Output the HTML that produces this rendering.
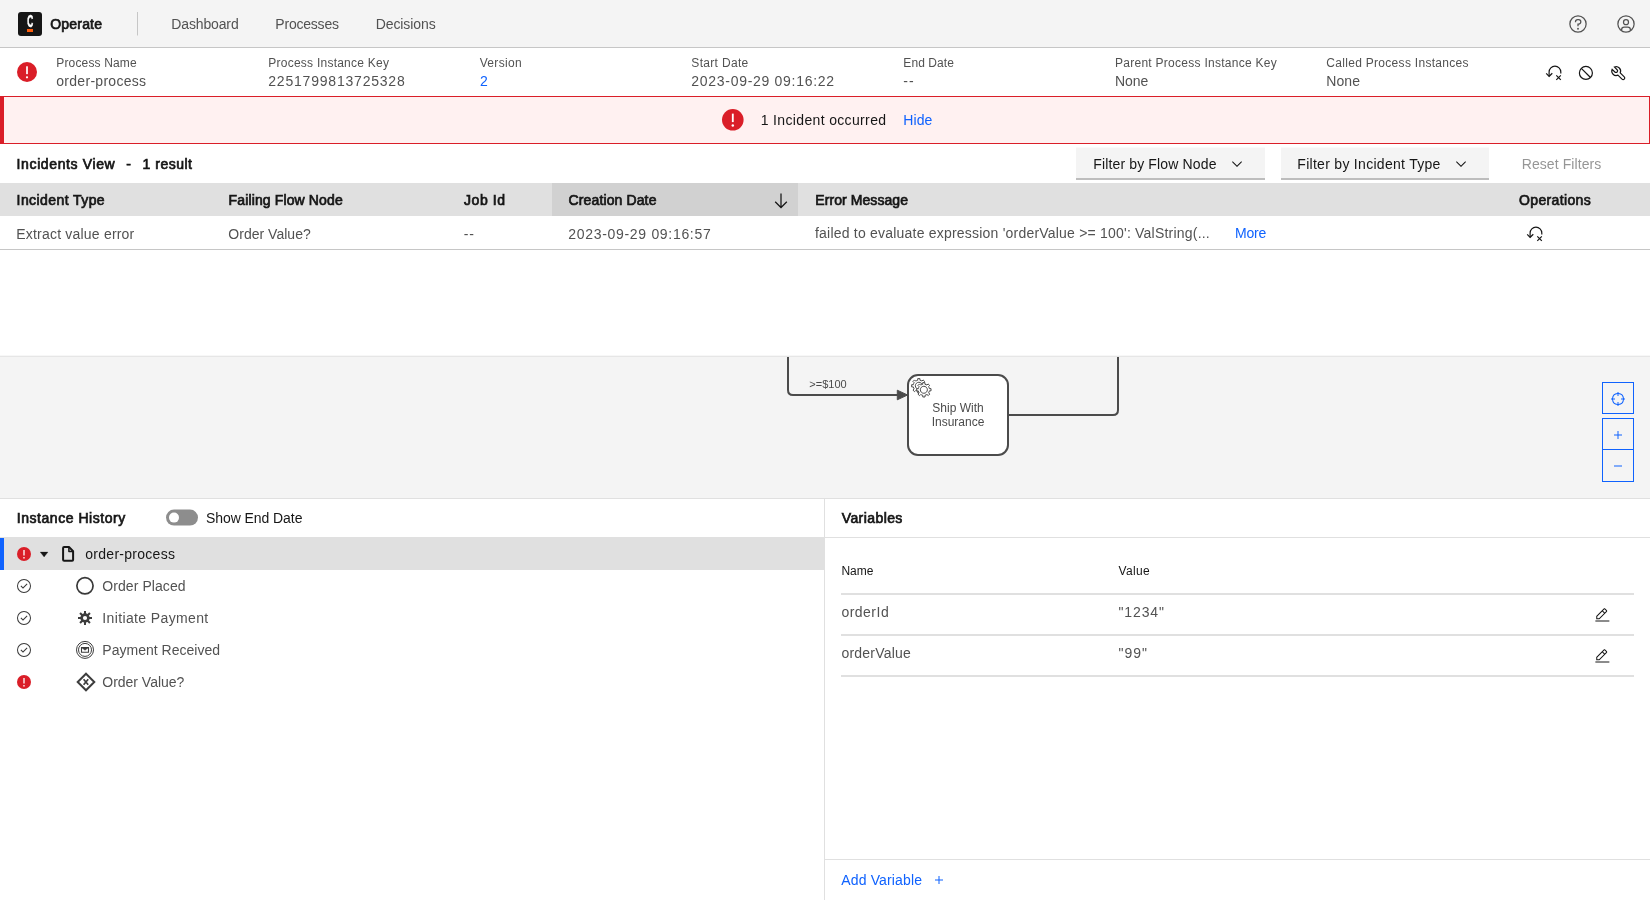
<!DOCTYPE html>
<html lang="en">
<head>
<meta charset="utf-8">
<title>Operate: Process Instance 2251799813725328 of order-process</title>
<style>
*{box-sizing:border-box}
html,body{margin:0;padding:0}
body{width:1650px;height:900px;overflow:hidden;position:relative;background:#fff;font-family:"Liberation Sans",sans-serif;color:#161616;font-size:14px}
.abs,.t,svg.i{position:absolute}
.layer{position:absolute;left:0;top:0;width:1650px;height:900px;will-change:transform}
.t{white-space:pre;line-height:20px;margin:0}
svg.i{overflow:visible}
header{position:absolute;left:0;top:0;width:1650px;height:48px;background:#f4f4f4;border-bottom:1px solid #c6c6c6}
.logo{position:absolute;left:18px;top:11.5px;width:24px;height:24px;background:#161616;border-radius:3px}
.logo i{position:absolute;left:8.9px;top:17.4px;width:6.2px;height:3.1px;background:#fc5d0d}
.vdiv{position:absolute;left:137px;top:12px;width:1px;height:24px;background:linear-gradient(#c6c6c6 23px,#dedede 23px)}
.banner{position:absolute;left:0;top:96px;width:1650px;height:48px;background:#fff1f1;border:1px solid #da1e28;border-left:4px solid #da1e28}
.dd{position:absolute;top:147px;height:33px;background:linear-gradient(#fafafa,#fafafa 1px,#f4f4f4 1px);border-bottom:2px solid #bdbdbd}
.thead{position:absolute;left:0;top:183px;width:1650px;height:33px;background:#e0e0e0}
.thead .sorted{position:absolute;left:552px;top:0;width:246px;height:33px;background:#d1d1d1}
.trow{position:absolute;left:0;top:216px;width:1650px;height:34px;border-bottom:1px solid #c6c6c6}
.diagram{position:absolute;left:0;top:356px;width:1650px;height:143px;background:#f4f4f4;border-top:1px solid #e6e6e6;border-bottom:1px solid #e0e0e0;overflow:hidden;box-shadow:0 -1px 0 #f7f7f7}
.zb{position:absolute;left:1602px;width:32px;height:32px;border:1px solid #0f62fe}
.hist{position:absolute;left:0;top:498px;width:824px;height:402px}
.vars{position:absolute;left:824px;top:498px;width:826px;height:402px;border-left:1px solid #e0e0e0}
.phead{position:absolute;left:0;top:0;width:100%;height:40px;border-bottom:1px solid #e0e0e0}
.sel{position:absolute;left:0;top:538px;width:824px;height:32px;background:#e0e0e0;border-left:4px solid #0f62fe}
.toggle{position:absolute;left:166px;top:510px;transform:translateY(-0.4px);width:32px;height:16px;border-radius:8px;background:#8d8d8d}
.toggle i{position:absolute;left:3px;top:3px;width:10px;height:10px;border-radius:5px;background:#fff}
.hl{position:absolute;left:841px;width:793px;height:2px;background:#e0e0e0}
.vfoot{position:absolute;left:825px;top:859px;width:825px;height:1px;background:#e0e0e0}
</style>
</head>
<body>
<header>
  <div class="logo"><i></i></div>
  <div class="vdiv"></div>
</header>
<div class="banner"></div>
<div class="dd" style="left:1076px;width:189px"></div>
<div class="dd" style="left:1281px;width:208px"></div>
<div class="thead"><div class="sorted"></div></div>
<div class="trow"></div>
<div class="diagram">
<svg class="i" style="left:0;top:-357px;will-change:transform" width="1650" height="900" viewBox="0 0 1650 900" font-family="Liberation Sans, Arial, sans-serif">
<g fill="none" stroke="#4b4b4b" stroke-width="2" stroke-linecap="round" stroke-linejoin="round">
<path d="M788 340V390Q788 395 793 395H898"/>
<path d="M1008 415H1113Q1118 415 1118 410V340"/>
</g>
<path d="M897.3 390.2L907.6 395 897.3 399.8z" fill="#4b4b4b" stroke="#4b4b4b" stroke-width="1" stroke-linejoin="round"/>
<rect x="908" y="375" width="100" height="80" rx="10" ry="10" fill="#fff" stroke="#4b4b4b" stroke-width="2"/>
<g transform="translate(908 375)" stroke="#4b4b4b" stroke-width="1" fill="#fff">
<path d="m 12,18 v -1.71335 c 0.352326,-0.0705 0.703932,-0.17838 1.047628,-0.32133 0.344416,-0.14465 0.665822,-0.32133 0.966377,-0.52145 l 1.19431,1.18005 1.567487,-1.57688 -1.195028,-1.18014 c 0.403376,-0.61394 0.683079,-1.29908 0.825447,-2.01824 l 1.622133,-0.01 v -2.2196 l -1.636514,0.01 c -0.07333,-0.35153 -0.178319,-0.70024 -0.323564,-1.04372 -0.145244,-0.34406 -0.321407,-0.6644 -0.522735,-0.96217 l 1.131035,-1.13631 -1.583305,-1.56293 -1.129598,1.13589 c -0.614052,-0.40108 -1.302883,-0.68093 -2.022633,-0.82247 l 0.0093,-1.61852 h -2.241173 l 0.0042,1.63124 c -0.353763,0.0736 -0.705369,0.17977 -1.049785,0.32371 -0.344415,0.14437 -0.665102,0.32092 -0.9635006,0.52046 l -1.1698628,-1.15823 -1.5667691,1.5792 1.1684265,1.15669 c -0.4026573,0.61283 -0.68308,1.29797 -0.8247287,2.01713 l -1.6588041,0.003 v 2.22174 l 1.6724648,-0.006 c 0.073327,0.35077 0.1797598,0.70243 0.3242851,1.04472 0.1452428,0.34448 0.3214064,0.6644 0.5227339,0.96066 l -1.1993431,1.19723 1.5840256,1.56011 1.1964668,-1.19348 c 0.6140517,0.40346 1.3028827,0.68232 2.0233517,0.82331 l 7.19e-4,1.69892 h 2.226848 z m 0.221462,-3.9957 c -1.788948,0.7502 -3.8576,-0.0928 -4.6097055,-1.87438 -0.7521065,-1.78321 0.090598,-3.84627 1.8802645,-4.59604 1.78823,-0.74936 3.856881,0.0929 4.608987,1.87437 0.752106,1.78165 -0.0906,3.84612 -1.879546,4.59605 z"/>
<path stroke="none" d="m 17.2,18 c -1.788948,0.7502 -3.8576,-0.0928 -4.6097055,-1.87438 -0.7521065,-1.78321 0.090598,-3.84627 1.8802645,-4.59604 1.78823,-0.74936 3.856881,0.0929 4.608987,1.87437 0.752106,1.78165 -0.0906,3.84612 -1.879546,4.59605 z"/>
<path d="m 17,22 v -1.71335 c 0.352326,-0.0705 0.703932,-0.17838 1.047628,-0.32133 0.344416,-0.14465 0.665822,-0.32133 0.966377,-0.52145 l 1.19431,1.18005 1.567487,-1.57688 -1.195028,-1.18014 c 0.403376,-0.61394 0.683079,-1.29908 0.825447,-2.01824 l 1.622133,-0.01 v -2.2196 l -1.636514,0.01 c -0.07333,-0.35153 -0.178319,-0.70024 -0.323564,-1.04372 -0.145244,-0.34406 -0.321407,-0.6644 -0.522735,-0.96217 l 1.131035,-1.13631 -1.583305,-1.56293 -1.129598,1.13589 c -0.614052,-0.40108 -1.302883,-0.68093 -2.022633,-0.82247 l 0.0093,-1.61852 h -2.241173 l 0.0042,1.63124 c -0.353763,0.0736 -0.705369,0.17977 -1.049785,0.32371 -0.344415,0.14437 -0.665102,0.32092 -0.9635006,0.52046 l -1.1698628,-1.15823 -1.5667691,1.5792 1.1684265,1.15669 c -0.4026573,0.61283 -0.68308,1.29797 -0.8247287,2.01713 l -1.6588041,0.003 v 2.22174 l 1.6724648,-0.006 c 0.073327,0.35077 0.1797598,0.70243 0.3242851,1.04472 0.1452428,0.34448 0.3214064,0.6644 0.5227339,0.96066 l -1.1993431,1.19723 1.5840256,1.56011 1.1964668,-1.19348 c 0.6140517,0.40346 1.3028827,0.68232 2.0233517,0.82331 l 7.19e-4,1.69892 h 2.226848 z m 0.221462,-3.9957 c -1.788948,0.7502 -3.8576,-0.0928 -4.6097055,-1.87438 -0.7521065,-1.78321 0.090598,-3.84627 1.8802645,-4.59604 1.78823,-0.74936 3.856881,0.0929 4.608987,1.87437 0.752106,1.78165 -0.0906,3.84612 -1.879546,4.59605 z"/>
</g>
<text x="809.3" y="388" font-size="11" fill="#4b4b4b">&gt;=$100</text>
<text x="958" y="411.7" font-size="12" fill="#4b4b4b" text-anchor="middle">Ship With</text>
<text x="958" y="425.7" font-size="12" fill="#4b4b4b" text-anchor="middle">Insurance</text>
</svg>

</div>
<div class="zb" style="top:382px"></div>
<div class="zb" style="top:418px"></div>
<div class="zb" style="top:449px;height:33px"></div>
<div class="hist"><div class="phead"></div></div>
<div class="vars"><div class="phead"></div></div>
<div class="sel"></div>
<div class="toggle"><i></i></div>
<div class="hl" style="top:593px"></div>
<div class="hl" style="top:634px"></div>
<div class="hl" style="top:675px"></div>
<div class="vfoot"></div>
<svg class="i" style="left:18px;top:11.5px;will-change:transform" width="24" height="24" viewBox="0 0 24 24"><text transform="translate(12.1 14.55) scale(0.52 1)" text-anchor="middle" font-family="Liberation Sans, sans-serif" font-weight="700" font-size="15.8" fill="#fff" stroke="#fff" stroke-width="0.6">C</text></svg>
<svg class="i" style="left:1568px;top:14px" width="20" height="20" viewBox="0 0 32 32" fill="#525252"><path d="M16,2A14,14,0,1,0,30,16,14,14,0,0,0,16,2Zm0,26A12,12,0,1,1,28,16,12,12,0,0,1,16,28Z"/><circle cx="16" cy="23.5" r="1.5"/><path d="M17,8H15.5A4.49,4.49,0,0,0,11,12.5V13h2v-.5A2.5,2.5,0,0,1,15.5,10H17a2.5,2.5,0,0,1,0,5H15v4.5h2V17a4.5,4.5,0,0,0,0-9Z"/></svg>
<svg class="i" style="left:1616px;top:14px" width="20" height="20" viewBox="0 0 32 32" fill="#525252"><path d="M16,8a5,5,0,1,0,5,5A5,5,0,0,0,16,8Zm0,8a3,3,0,1,1,3-3A3.0034,3.0034,0,0,1,16,16Z"/><path d="M16,2A14,14,0,1,0,30,16,14.0158,14.0158,0,0,0,16,2ZM10,26.3765V25a3.0033,3.0033,0,0,1,3-3h6a3.0033,3.0033,0,0,1,3,3v1.3765a11.8989,11.8989,0,0,1-12,0Zm13.9925-1.4507A5.0016,5.0016,0,0,0,19,20H13a5.0016,5.0016,0,0,0-4.9925,4.9258,12,12,0,1,1,15.985,0Z"/></svg>
<!-- error icons -->
<svg class="i" style="left:17px;top:62px" width="20" height="20" viewBox="2 2 28 28"><circle cx="16" cy="16" r="14" fill="#da1e28"/><rect x="14.8" y="8" width="2.4" height="11" fill="#fff"/><circle cx="16" cy="23.5" r="1.6" fill="#fff"/></svg>
<svg class="i" style="left:721.7px;top:109.2px" width="21.6" height="21.6" viewBox="2 2 28 28"><circle cx="16" cy="16" r="14" fill="#da1e28"/><rect x="14.8" y="8" width="2.4" height="11" fill="#fff"/><circle cx="16" cy="23.5" r="1.6" fill="#fff"/></svg>
<svg class="i" style="left:17px;top:547px" width="14" height="14" viewBox="2 2 28 28"><circle cx="16" cy="16" r="14" fill="#da1e28"/><rect x="14.7" y="8" width="2.6" height="11" fill="#fff"/><circle cx="16" cy="23.5" r="1.7" fill="#fff"/></svg>
<svg class="i" style="left:17px;top:675px" width="14" height="14" viewBox="2 2 28 28"><circle cx="16" cy="16" r="14" fill="#da1e28"/><rect x="14.7" y="8" width="2.6" height="11" fill="#fff"/><circle cx="16" cy="23.5" r="1.7" fill="#fff"/></svg>
<!-- action icons -->
<svg class="i" style="left:1546px;top:65px" width="16" height="16" viewBox="0 0 16 16" fill="none" stroke="#161616" stroke-width="1.2"><path d="M3.1 11.2V7A5.85 5.85 0 0 1 14.8 7V8.5"/><path d="M0.2 8.3L3.15 11.3 6.3 8.3"/><path d="M10.3 10.4L14.8 14.9M14.8 10.4L10.3 14.9"/></svg>
<svg class="i" style="left:1578px;top:65px" width="16" height="16" viewBox="0 0 16 16" fill="none" stroke="#161616" stroke-width="1.2"><circle cx="7.9" cy="7.9" r="6.5"/><path d="M3.3 3.3L12.5 12.5"/></svg>
<svg class="i" style="left:1610px;top:65px" width="16" height="16" viewBox="0 0 16 16" fill="none" stroke="#161616" stroke-width="1.2"><path transform="translate(6.2 6.1) rotate(-45)" d="M-1.6-4.1V-.3A1.6 1.6 0 0 0 1.6-.3V-4.1A4.4 4.4 0 0 1 1.6 4.1V9.8A1.6 1.6 0 0 1-1.6 9.8V4.1A4.4 4.4 0 0 1-1.6-4.1Z"/></svg>
<svg class="i" style="left:1526.5px;top:226px" width="16" height="16" viewBox="0 0 16 16" fill="none" stroke="#161616" stroke-width="1.2"><path d="M3.1 11.2V7A5.85 5.85 0 0 1 14.8 7V8.5"/><path d="M0.2 8.3L3.15 11.3 6.3 8.3"/><path d="M10.3 10.4L14.8 14.9M14.8 10.4L10.3 14.9"/></svg>
<!-- chevrons / arrow -->
<svg class="i" style="left:1229px;top:156px" width="16" height="16" viewBox="0 0 16 16" fill="#161616"><path d="M8 11L3 6 3.7 5.3 8 9.6 12.3 5.3 13 6z"/></svg>
<svg class="i" style="left:1453px;top:156px" width="16" height="16" viewBox="0 0 16 16" fill="#161616"><path d="M8 11L3 6 3.7 5.3 8 9.6 12.3 5.3 13 6z"/></svg>
<svg class="i" style="left:771px;top:190.5px" width="20" height="20" viewBox="0 0 32 32" fill="#161616"><path d="M24.59 16.59L17 24.17 17 4 15 4 15 24.17 7.41 16.59 6 18 16 28 26 18 24.59 16.59z"/></svg>
<!-- zoom controls -->
<svg class="i" style="left:1610px;top:391px" width="16" height="16" viewBox="0 0 32 32" fill="#0f62fe"><path d="M30,15H27.9492A12.0071,12.0071,0,0,0,17,4.0508V2H15V4.0508A12.0071,12.0071,0,0,0,4.0508,15H2v2H4.0508A12.0071,12.0071,0,0,0,15,27.9492V30h2V27.9492A12.0071,12.0071,0,0,0,27.9492,17H30ZM17,25.9492V22H15v3.9492A10.0166,10.0166,0,0,1,6.0508,17H10V15H6.0508A10.0166,10.0166,0,0,1,15,6.0508V10h2V6.0508A10.0166,10.0166,0,0,1,25.9492,15H22v2h3.9492A10.0166,10.0166,0,0,1,17,25.9492Z"/></svg>
<svg class="i" style="left:1610px;top:427px" width="16" height="16" viewBox="0 0 32 32" fill="#0f62fe"><path d="M17 15L17 8 15 8 15 15 8 15 8 17 15 17 15 24 17 24 17 17 24 17 24 15z"/></svg>
<svg class="i" style="left:1610px;top:458px" width="16" height="16" viewBox="0 0 32 32" fill="#0f62fe"><path d="M8 15H24V17H8z"/></svg>
<!-- instance history icons -->
<svg class="i" style="left:39.9px;top:551.9px" width="8.2" height="5" viewBox="0 0 8.2 5"><path d="M0.2 0.1H8L4.1 4.9z" fill="#161616" stroke="#161616" stroke-width="0.3" stroke-linejoin="round"/></svg>
<svg class="i" style="left:60px;top:544px" width="16" height="20" viewBox="60 544 16 20" fill="none" stroke="#161616" stroke-linejoin="round"><path d="M63.1 548.1a1 1 0 0 1 1-1H69.2L73.1 551.2V559.8a1 1 0 0 1-1 1H64.1a1 1 0 0 1-1-1z" stroke-width="2"/><path d="M68.9 547.4V551.6H73" stroke-width="1.5"/></svg>
<svg class="i" style="left:16px;top:578px" width="16" height="16" viewBox="0 0 32 32" fill="#393939"><path d="M14 21.414L9 16.413 10.413 15 14 18.586 21.585 11 23 12.415 14 21.414z"/><path d="M16,2A14,14,0,1,0,30,16,14,14,0,0,0,16,2Zm0,26A12,12,0,1,1,28,16,12,12,0,0,1,16,28Z"/></svg>
<svg class="i" style="left:16px;top:610px" width="16" height="16" viewBox="0 0 32 32" fill="#393939"><path d="M14 21.414L9 16.413 10.413 15 14 18.586 21.585 11 23 12.415 14 21.414z"/><path d="M16,2A14,14,0,1,0,30,16,14,14,0,0,0,16,2Zm0,26A12,12,0,1,1,28,16,12,12,0,0,1,16,28Z"/></svg>
<svg class="i" style="left:16px;top:642px" width="16" height="16" viewBox="0 0 32 32" fill="#393939"><path d="M14 21.414L9 16.413 10.413 15 14 18.586 21.585 11 23 12.415 14 21.414z"/><path d="M16,2A14,14,0,1,0,30,16,14,14,0,0,0,16,2Zm0,26A12,12,0,1,1,28,16,12,12,0,0,1,16,28Z"/></svg>
<!-- flow node type icons -->
<svg class="i" style="left:75px;top:576px" width="20" height="20" viewBox="0 0 20 20" fill="none" stroke="#393939"><circle cx="9.97" cy="9.8" r="8.1" stroke-width="1.7"/></svg>
<svg class="i" style="left:75px;top:608px" width="20" height="20" viewBox="-10 -10 20 20"><g fill="#3d3d3d"><rect x="-1" y="-7" width="2" height="14"/><rect x="-1" y="-7" width="2" height="14" transform="rotate(45)"/><rect x="-1" y="-7" width="2" height="14" transform="rotate(90)"/><rect x="-1" y="-7" width="2" height="14" transform="rotate(135)"/><circle r="4.7"/></g><circle r="2.1" fill="#fff"/></svg>
<svg class="i" style="left:75px;top:640px" width="20" height="20" viewBox="0 0 20 20" fill="none" stroke="#3d3d3d"><circle cx="10" cy="9.9" r="8.5" stroke-width="1"/><circle cx="10" cy="9.9" r="6.5" stroke-width="1"/><path d="M6.5 7.5H13.5V12.3H6.5z" stroke-width="1.1"/><path d="M7 7.8L10 10.2 13 7.8z" stroke-width="0.6" fill="#3d3d3d"/></svg>
<svg class="i" style="left:76px;top:672px" width="20" height="20" viewBox="0 0 20 20" fill="none" stroke="#3d3d3d"><path d="M10 1.7L18.3 10 10 18.3 1.7 10z" stroke-width="2"/><path d="M7.6 7.2L12.2 12.8M12.2 7.2L7.6 12.8" stroke-width="1.7"/></svg>
<!-- edit pencils -->
<svg class="i" style="left:1594px;top:607px" width="16" height="16" viewBox="0 0 32 32" fill="#161616"><path transform="translate(0.7 1)" d="M2 26H30V28H2z"/><path transform="translate(0.5 0.5)" d="M25.4 9c.8-.8.8-2 0-2.8 0 0 0 0 0 0l-3.6-3.6c-.8-.8-2-.8-2.8 0 0 0 0 0 0 0l-15 15V24h6.4L25.4 9zM20.4 4L24 7.6l-3 3L17.4 7 20.4 4zM6 22v-3.6l10-10 3.6 3.6-10 10H6z"/></svg>
<svg class="i" style="left:1594px;top:648px" width="16" height="16" viewBox="0 0 32 32" fill="#161616"><path transform="translate(0.7 1)" d="M2 26H30V28H2z"/><path transform="translate(0.5 0.5)" d="M25.4 9c.8-.8.8-2 0-2.8 0 0 0 0 0 0l-3.6-3.6c-.8-.8-2-.8-2.8 0 0 0 0 0 0 0l-15 15V24h6.4L25.4 9zM20.4 4L24 7.6l-3 3L17.4 7 20.4 4zM6 22v-3.6l10-10 3.6 3.6-10 10H6z"/></svg>
<svg class="i" style="left:931px;top:872px" width="16" height="16" viewBox="0 0 32 32" fill="#0f62fe"><path d="M17 15L17 8 15 8 15 15 8 15 8 17 15 17 15 24 17 24 17 17 24 17 24 15z"/></svg>

<div class="layer">
<span class="t" style="left:50.3px;top:14.4px;-webkit-text-stroke:0.7px;letter-spacing:0.18px">Operate</span>
<span class="t" style="left:171.3px;top:14.4px;color:#525252;letter-spacing:-0.14px">Dashboard</span>
<span class="t" style="left:275.3px;top:14.4px;color:#525252;letter-spacing:-0.21px">Processes</span>
<span class="t" style="left:375.7px;top:14.4px;color:#525252;letter-spacing:-0.09px">Decisions</span>
<span class="t" style="left:56.3px;top:52.5px;font-size:12px;color:#525252;letter-spacing:0.15px">Process Name</span>
<span class="t" style="left:268.3px;top:52.5px;font-size:12px;color:#525252;letter-spacing:0.24px">Process Instance Key</span>
<span class="t" style="left:479.7px;top:52.5px;font-size:12px;color:#525252;letter-spacing:0.33px">Version</span>
<span class="t" style="left:691.3px;top:52.5px;font-size:12px;color:#525252;letter-spacing:0.33px">Start Date</span>
<span class="t" style="left:903.3px;top:52.5px;font-size:12px;color:#525252;letter-spacing:0.09px">End Date</span>
<span class="t" style="left:1115.0px;top:52.5px;font-size:12px;color:#525252;letter-spacing:0.27px">Parent Process Instance Key</span>
<span class="t" style="left:1326.3px;top:52.5px;font-size:12px;color:#525252;letter-spacing:0.3px">Called Process Instances</span>
<span class="t" style="left:56.3px;top:71.1px;color:#525252;letter-spacing:0.28px">order-process</span>
<span class="t" style="left:268.3px;top:71.1px;color:#525252;letter-spacing:0.79px">2251799813725328</span>
<span class="t" style="left:480.0px;top:71.1px;color:#0f62fe">2</span>
<span class="t" style="left:691.3px;top:71.1px;color:#525252;letter-spacing:0.71px">2023-09-29 09:16:22</span>
<span class="t" style="left:903.3px;top:71.1px;color:#525252;letter-spacing:1.07px">--</span>
<span class="t" style="left:1115.0px;top:71.1px;color:#525252;letter-spacing:-0.06px">None</span>
<span class="t" style="left:1326.3px;top:71.1px;color:#525252;letter-spacing:0.08px">None</span>
<span class="t" style="left:760.7px;top:110.4px;letter-spacing:0.35px">1 Incident occurred</span>
<span class="t" style="left:903.3px;top:110.4px;color:#0f62fe;letter-spacing:0.07px">Hide</span>
<span class="t" style="left:16.6px;top:154.4px;-webkit-text-stroke:0.7px;letter-spacing:0.62px">Incidents View</span>
<span class="t" style="left:126.3px;top:154.4px;-webkit-text-stroke:0.7px">-</span>
<span class="t" style="left:142.6px;top:154.4px;-webkit-text-stroke:0.7px;letter-spacing:0.5px">1 result</span>
<span class="t" style="left:1093.2px;top:154.4px;letter-spacing:0.15px">Filter by Flow Node</span>
<span class="t" style="left:1297.3px;top:154.4px;letter-spacing:0.29px">Filter by Incident Type</span>
<span class="t" style="left:1521.7px;top:154.4px;color:#969696;letter-spacing:0.09px">Reset Filters</span>
<span class="t" style="left:16.6px;top:190.1px;-webkit-text-stroke:0.7px;letter-spacing:0.42px">Incident Type</span>
<span class="t" style="left:228.6px;top:190.1px;-webkit-text-stroke:0.7px;letter-spacing:0.13px">Failing Flow Node</span>
<span class="t" style="left:464.0px;top:190.1px;-webkit-text-stroke:0.7px;letter-spacing:0.57px">Job Id</span>
<span class="t" style="left:568.6px;top:190.1px;-webkit-text-stroke:0.7px;letter-spacing:0.12px">Creation Date</span>
<span class="t" style="left:815.3px;top:190.1px;-webkit-text-stroke:0.7px;letter-spacing:0.07px">Error Message</span>
<span class="t" style="left:1519.0px;top:190.1px;-webkit-text-stroke:0.7px;letter-spacing:0.36px">Operations</span>
<span class="t" style="left:16.3px;top:224.1px;color:#525252;letter-spacing:0.2px">Extract value error</span>
<span class="t" style="left:228.3px;top:224.1px;color:#525252;letter-spacing:0.02px">Order Value?</span>
<span class="t" style="left:463.7px;top:224.1px;color:#525252;letter-spacing:0.97px">--</span>
<span class="t" style="left:568.3px;top:224.1px;color:#525252;letter-spacing:0.69px">2023-09-29 09:16:57</span>
<span class="t" style="left:815.0px;top:223.4px;color:#525252;letter-spacing:0.21px">failed to evaluate expression 'orderValue &gt;= 100': ValString(...</span>
<span class="t" style="left:1235.0px;top:223.4px;color:#0f62fe;letter-spacing:-0.2px">More</span>
<span class="t" style="left:16.8px;top:507.6px;-webkit-text-stroke:0.7px;letter-spacing:0.54px">Instance History</span>
<span class="t" style="left:206.0px;top:507.6px;letter-spacing:-0.07px">Show End Date</span>
<span class="t" style="left:85.3px;top:543.5px;letter-spacing:0.27px">order-process</span>
<span class="t" style="left:102.3px;top:575.5px;color:#525252;letter-spacing:0.07px">Order Placed</span>
<span class="t" style="left:102.3px;top:607.5px;color:#525252;letter-spacing:0.37px">Initiate Payment</span>
<span class="t" style="left:102.3px;top:639.5px;color:#525252;letter-spacing:0.02px">Payment Received</span>
<span class="t" style="left:102.3px;top:671.5px;color:#525252;letter-spacing:-0.02px">Order Value?</span>
<span class="t" style="left:841.7px;top:507.6px;-webkit-text-stroke:0.7px;letter-spacing:0.42px">Variables</span>
<span class="t" style="left:841.4px;top:560.7px;font-size:12px;letter-spacing:-0.01px">Name</span>
<span class="t" style="left:1118.5px;top:560.7px;font-size:12px;letter-spacing:0.32px">Value</span>
<span class="t" style="left:841.4px;top:601.7px;color:#525252;letter-spacing:0.49px">orderId</span>
<span class="t" style="left:1118.5px;top:601.7px;color:#525252;letter-spacing:0.88px">"1234"</span>
<span class="t" style="left:841.4px;top:643.0px;color:#525252;letter-spacing:0.22px">orderValue</span>
<span class="t" style="left:1118.5px;top:643.0px;color:#525252;letter-spacing:0.99px">"99"</span>
<span class="t" style="left:841.2px;top:869.6px;color:#0f62fe;letter-spacing:0.16px">Add Variable</span>
</div>
</body>
</html>
